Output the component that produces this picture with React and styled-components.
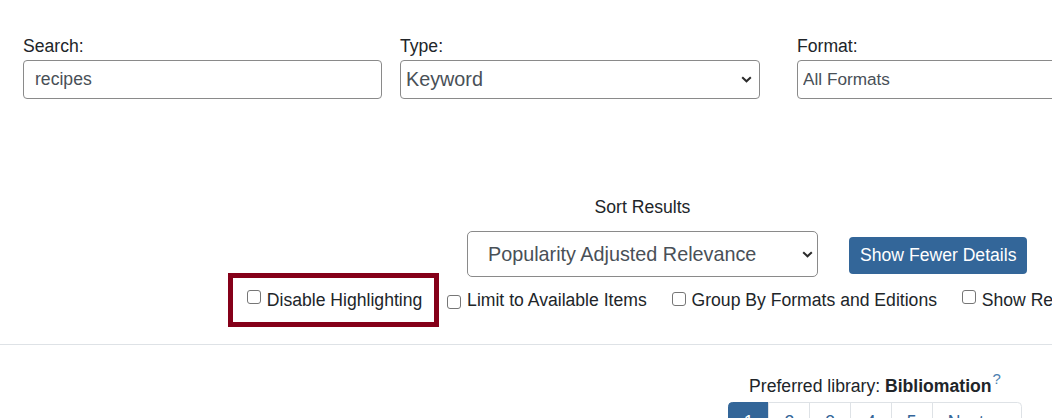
import React from "react";
import styled, { createGlobalStyle, css } from "styled-components";

const Global = createGlobalStyle`
  html, body { margin: 0; padding: 0; background: #fff; overflow: hidden; }
  body {
    font-family: "Liberation Sans", Arial, sans-serif;
    font-size: 17.6px;
    line-height: 1.5;
    color: #212529;
  }
  * { box-sizing: border-box; }
`;

const Page = styled.div`
  width: 1052px;
  height: 418px;
  overflow: hidden;
`;

const SearchBar = styled.div`
  display: flex;
  padding: 33px 0 0 23px;
`;

const Field = styled.div`
  display: flex;
  flex-direction: column;
  flex-shrink: 0;
  width: ${(p) => p.$width}px;
  margin-right: ${(p) => p.$trail || 0}px;
`;

const Label = styled.label`
  display: block;
  height: 26.6px;
`;

const TextInput = styled.input`
  height: 39px;
  width: 100%;
  border: 1px solid #8a8a8a;
  border-radius: 4px;
  padding: 0 11px;
  font: inherit;
  color: #495057;
  background: #fff;
  outline: none;
`;

const SelectWrap = styled.div`
  position: relative;
  width: 100%;
`;

const Select = styled.select`
  appearance: none;
  -webkit-appearance: none;
  width: 100%;
  height: ${(p) => p.$height}px;
  border: 1px solid #8a8a8a;
  border-radius: ${(p) => p.$radius}px;
  padding: 0 ${(p) => p.$pad}px;
  font-family: inherit;
  font-size: ${(p) => p.$size}px;
  color: #495057;
  background: #fff;
  outline: none;
`;

const Chevron = styled.svg`
  position: absolute;
  top: 50%;
  right: ${(p) => p.$right}px;
  width: 11px;
  height: 7px;
  margin-top: -3px;
  pointer-events: none;
`;

const ChevronIcon = ({ right }) => (
  <Chevron $right={right} viewBox="0 0 11 7">
    <path d="M1.2 1.2 L5.5 5.3 L9.8 1.2" fill="none" stroke="#2b2b2b" strokeWidth="2" />
  </Chevron>
);

const SortSection = styled.div`
  margin-top: 95.5px;
`;

const SortRow = styled.div`
  display: flex;
  align-items: flex-end;
  gap: 31px;
  margin-left: 467px;
`;

const SortGroup = styled.div`
  display: flex;
  flex-direction: column;
  width: 351px;
  flex-shrink: 0;
`;

const SortLabel = styled.div`
  text-align: center;
  margin-bottom: 10.5px;
`;

const DetailsButton = styled.button`
  flex-shrink: 0;
  height: 37px;
  margin-bottom: 3px;
  padding: 0 11px;
  border: none;
  border-radius: 4px;
  background: #336699;
  color: #fff;
  font-family: inherit;
  font-size: 17.6px;
  white-space: nowrap;
`;

const OptionsRow = styled.div`
  display: flex;
  gap: 25px;
  margin: 9.8px 0 0 247px;
  white-space: nowrap;
`;

const CheckOption = styled.label`
  position: relative;
  display: flex;
  align-items: flex-start;
  flex-shrink: 0;
  line-height: 26.4px;
  ${(p) =>
    p.$highlighted &&
    css`
      &::after {
        content: "";
        position: absolute;
        top: -14px;
        bottom: -14px;
        left: -19px;
        right: -17px;
        border: 5px solid #850019;
        pointer-events: none;
      }
    `}
`;

const CheckBox = styled.input.attrs({ type: "checkbox" })`
  appearance: none;
  -webkit-appearance: none;
  width: 14px;
  height: 14px;
  margin: ${(p) => p.$drop}px 5.8px 0 0;
  border: 1px solid #767676;
  border-radius: 3px;
  background: #fff;
  flex-shrink: 0;
`;

const Divider = styled.div`
  margin-top: 30.6px;
  border-top: 1px solid #dee2e6;
`;

const ResultsHeader = styled.div`
  display: flex;
  flex-direction: column;
  align-items: center;
  width: 350px;
  margin: 28.5px 0 0 700px;
`;

const PreferredLine = styled.div`
  white-space: nowrap;
  height: 26.4px;
`;

const Help = styled.span`
  display: inline-block;
  font-size: 15px;
  line-height: 0;
  vertical-align: 8px;
  color: #4d7fb0;
  margin-left: 1px;
`;

const Pagination = styled.ul`
  display: flex;
  list-style: none;
  margin: 2px 0 0;
  padding: 0;
`;

const PageItem = styled.li`
  padding: 6.6px 15px;
  border: 1px solid ${(p) => (p.$active ? "#336699" : "#dee2e6")};
  margin-left: -1px;
  background: ${(p) => (p.$active ? "#336699" : "#fff")};
  color: ${(p) => (p.$active ? "#fff" : "#336699")};
  white-space: nowrap;
  &:first-child {
    margin-left: 0;
    border-top-left-radius: 4.4px;
  }
  &:last-child {
    border-top-right-radius: 4.4px;
  }
`;

const options = [
  { text: "Disable Highlighting", highlighted: true, drop: 3.5 },
  { text: "Limit to Available Items", drop: 8 },
  { text: "Group By Formats and Editions", drop: 5 },
  { text: "Show Results from All Libraries", drop: 3.5 },
];

export default function App() {
  return (
    <Page>
      <Global />
      <SearchBar>
        <Field $width={359} $trail={18}>
          <Label>Search:</Label>
          <TextInput defaultValue="recipes" />
        </Field>
        <Field $width={360} $trail={37}>
          <Label>Type:</Label>
          <SelectWrap>
            <Select $height={39} $radius={4} $pad={5} $size={19.8} defaultValue="Keyword">
              <option>Keyword</option>
              <option>Title</option>
              <option>Author</option>
            </Select>
            <ChevronIcon right={8} />
          </SelectWrap>
        </Field>
        <Field $width={360}>
          <Label>Format:</Label>
          <SelectWrap>
            <Select $height={39} $radius={4} $pad={5} $size={17.2} defaultValue="All Formats">
              <option>All Formats</option>
              <option>Books</option>
            </Select>
          </SelectWrap>
        </Field>
      </SearchBar>

      <SortSection>
        <SortRow>
          <SortGroup>
            <SortLabel>Sort Results</SortLabel>
            <SelectWrap>
              <Select
                $height={46}
                $radius={5}
                $pad={20}
                $size={19.8}
                defaultValue="Popularity Adjusted Relevance"
              >
                <option>Popularity Adjusted Relevance</option>
                <option>Title</option>
              </Select>
              <ChevronIcon right={5} />
            </SelectWrap>
          </SortGroup>
          <DetailsButton>Show Fewer Details</DetailsButton>
        </SortRow>
        <OptionsRow>
          {options.map((o) => (
            <CheckOption key={o.text} $highlighted={o.highlighted}>
              <CheckBox $drop={o.drop} />
              {o.text}
            </CheckOption>
          ))}
        </OptionsRow>
      </SortSection>

      <Divider />

      <ResultsHeader>
        <PreferredLine>
          Preferred library: <strong>Bibliomation</strong>
          <Help>?</Help>
        </PreferredLine>
        <Pagination>
          {["1", "2", "3", "4", "5", "Next →"].map((p, i) => (
            <PageItem key={p} $active={i === 0}>
              {p}
            </PageItem>
          ))}
        </Pagination>
      </ResultsHeader>
    </Page>
  );
}
